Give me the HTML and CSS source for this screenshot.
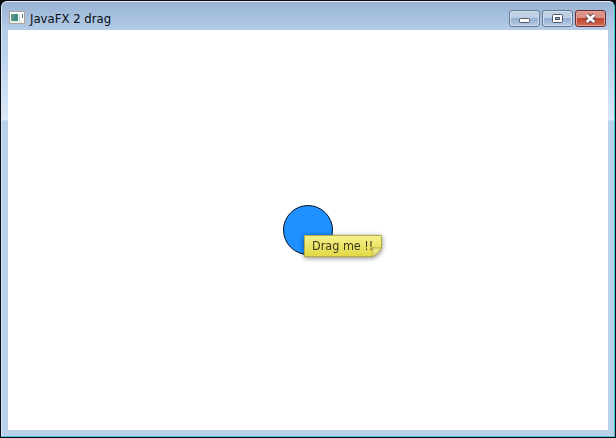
FILE: index.html
```html
<!DOCTYPE html>
<html lang="en">
<head>
<meta charset="utf-8">
<title>JavaFX 2 drag</title>
<link rel="stylesheet" href="styles.css">
</head>
<body>
<div class="window">
  <header class="titlebar">
    <svg class="app-icon" width="16" height="14" viewBox="0 0 16 14">
      <rect x=".5" y=".5" width="15" height="12" fill="#fafcf9" stroke="#aaa69e"/>
      <rect x="2" y="3" width="7" height="7" fill="#438985"/>
      <path d="M2 3h3v7H2z" fill="#5a9b82"/>
      <path d="M10 4h1v6h-1z" fill="#c3d5d1"/>
      <path d="M13 3h1v4h-1z" fill="#55777a"/>
      <path d="M2 11h11" stroke="#d5dedb"/>
    </svg>
    <h1 class="title">JavaFX 2 drag</h1>
    <div class="controls">
      <button class="control" aria-label="Minimize"><svg width="31" height="17" viewBox="0 0 31 17"><rect x="10.5" y="8.5" width="10" height="4" rx="1" fill="#fff" stroke="#535666"/></svg></button>
      <button class="control" aria-label="Maximize"><svg width="31" height="17" viewBox="0 0 31 17"><rect x="10.5" y="4.5" width="10" height="8" rx="1" fill="#fff" stroke="#535666"/><rect x="13.5" y="7.5" width="4" height="2" fill="#91abc9" stroke="#535666"/></svg></button>
      <button class="control close" aria-label="Close"><svg width="31" height="17" viewBox="0 0 31 17"><path d="M11.7 5l7.5 7m0-7l-7.5 7" stroke="#63424a" stroke-width="4.6"/><path d="M11.7 5l7.5 7m0-7l-7.5 7" stroke="#fff" stroke-width="2.6"/></svg></button>
    </div>
  </header>
  <main class="scene">
    <div class="circle"></div>
    <div class="tooltip">
      <svg class="note" width="78" height="22" viewBox="0 0 78 22">
        <defs>
          <linearGradient id="paper" x2="0" y2="1"><stop stop-color="#f5f08c"/><stop offset="1" stop-color="#e2d844"/></linearGradient>
          <linearGradient id="fold" x2="1" y2="1"><stop stop-color="#d8cf58"/><stop offset=".4" stop-color="#f0eb8a"/><stop offset="1" stop-color="#a89e44"/></linearGradient>
        </defs>
        <path d="M.5.5h77v12.5l-8.5 8.5H.5z" fill="url(#paper)" stroke="#b5ad48"/>
      </svg>
      <span class="tip-text">Drag me !!</span>
      <svg class="note" width="78" height="22" viewBox="0 0 78 22">
        <path d="M77.5 12.5c-2 1-6 .3-9.5 0 1 4 1.5 7-.5 9 4.5-.5 8-4 10-9z" fill="url(#fold)" stroke="#a59b43" stroke-width=".7"/>
      </svg>
    </div>
  </main>
</div>
</body>
</html>
```
FILE: styles.css
```css
* { box-sizing: border-box; }
body { margin: 0; background: #090b12; overflow: hidden; }
.window {
  width: 614px;
  height: 436px;
  margin: 1px 0 0 1px;
  padding: 0 6px 6px;
  border: 1px solid #4fc5d4;
  border-top-color: #edf2f8;
  border-left-color: #dce8f5;
  border-radius: 6px 6px 1px 1px;
  background: linear-gradient(#98b4d3, #b5cde8 29px, #c3d8f0 70px, #dae8f8 118px, #b9d1ea 119px, #b9d1ea);
}
.titlebar { display: flex; height: 28px; padding-left: 1px; }
.app-icon { margin: 9px 5px 0 0; flex: none; }
.title {
  flex: 1;
  margin: 7px 0 0;
  font: 13px/20px "DejaVu Sans Condensed", "DejaVu Sans", sans-serif;
  font-stretch: condensed;
  color: #080d15;
}
.controls { display: flex; gap: 2px; padding: 8px 2px 0 0; }
.control {
  width: 31px;
  height: 17px;
  padding: 0;
  border: 1px solid #647891;
  border-radius: 3px;
  box-shadow: inset 0 0 0 1px #d1dfef;
  background: linear-gradient(#bdd0e6 47%, #93b0d0 50%, #b5cce4);
}
.control svg { display: block; margin: -1px; }
.close {
  border-color: #642c30;
  box-shadow: inset 0 0 0 1px #e6a097;
  background: linear-gradient(#db9388 47%, #bd4232 50%, #cf6b50);
}
.scene { position: relative; height: 400px; background: #fff; }
.circle {
  position: absolute;
  left: 275px;
  top: 175px;
  width: 50px;
  height: 50px;
  border: 1px solid #07111d;
  border-radius: 50%;
  background: #1e90ff;
}
.tooltip {
  position: absolute;
  left: 296px;
  top: 205px;
  width: 78px;
  height: 22px;
  filter: drop-shadow(0 1px 2.5px rgb(0 0 0 / .5));
}
.note { position: absolute; inset: 0; }
.tip-text {
  position: absolute;
  left: 8px;
  top: 1px;
  white-space: nowrap;
  font: 12.5px/20px "DejaVu Sans Condensed", "DejaVu Sans", sans-serif;
  font-stretch: condensed;
  color: #3c3920;
}
```
